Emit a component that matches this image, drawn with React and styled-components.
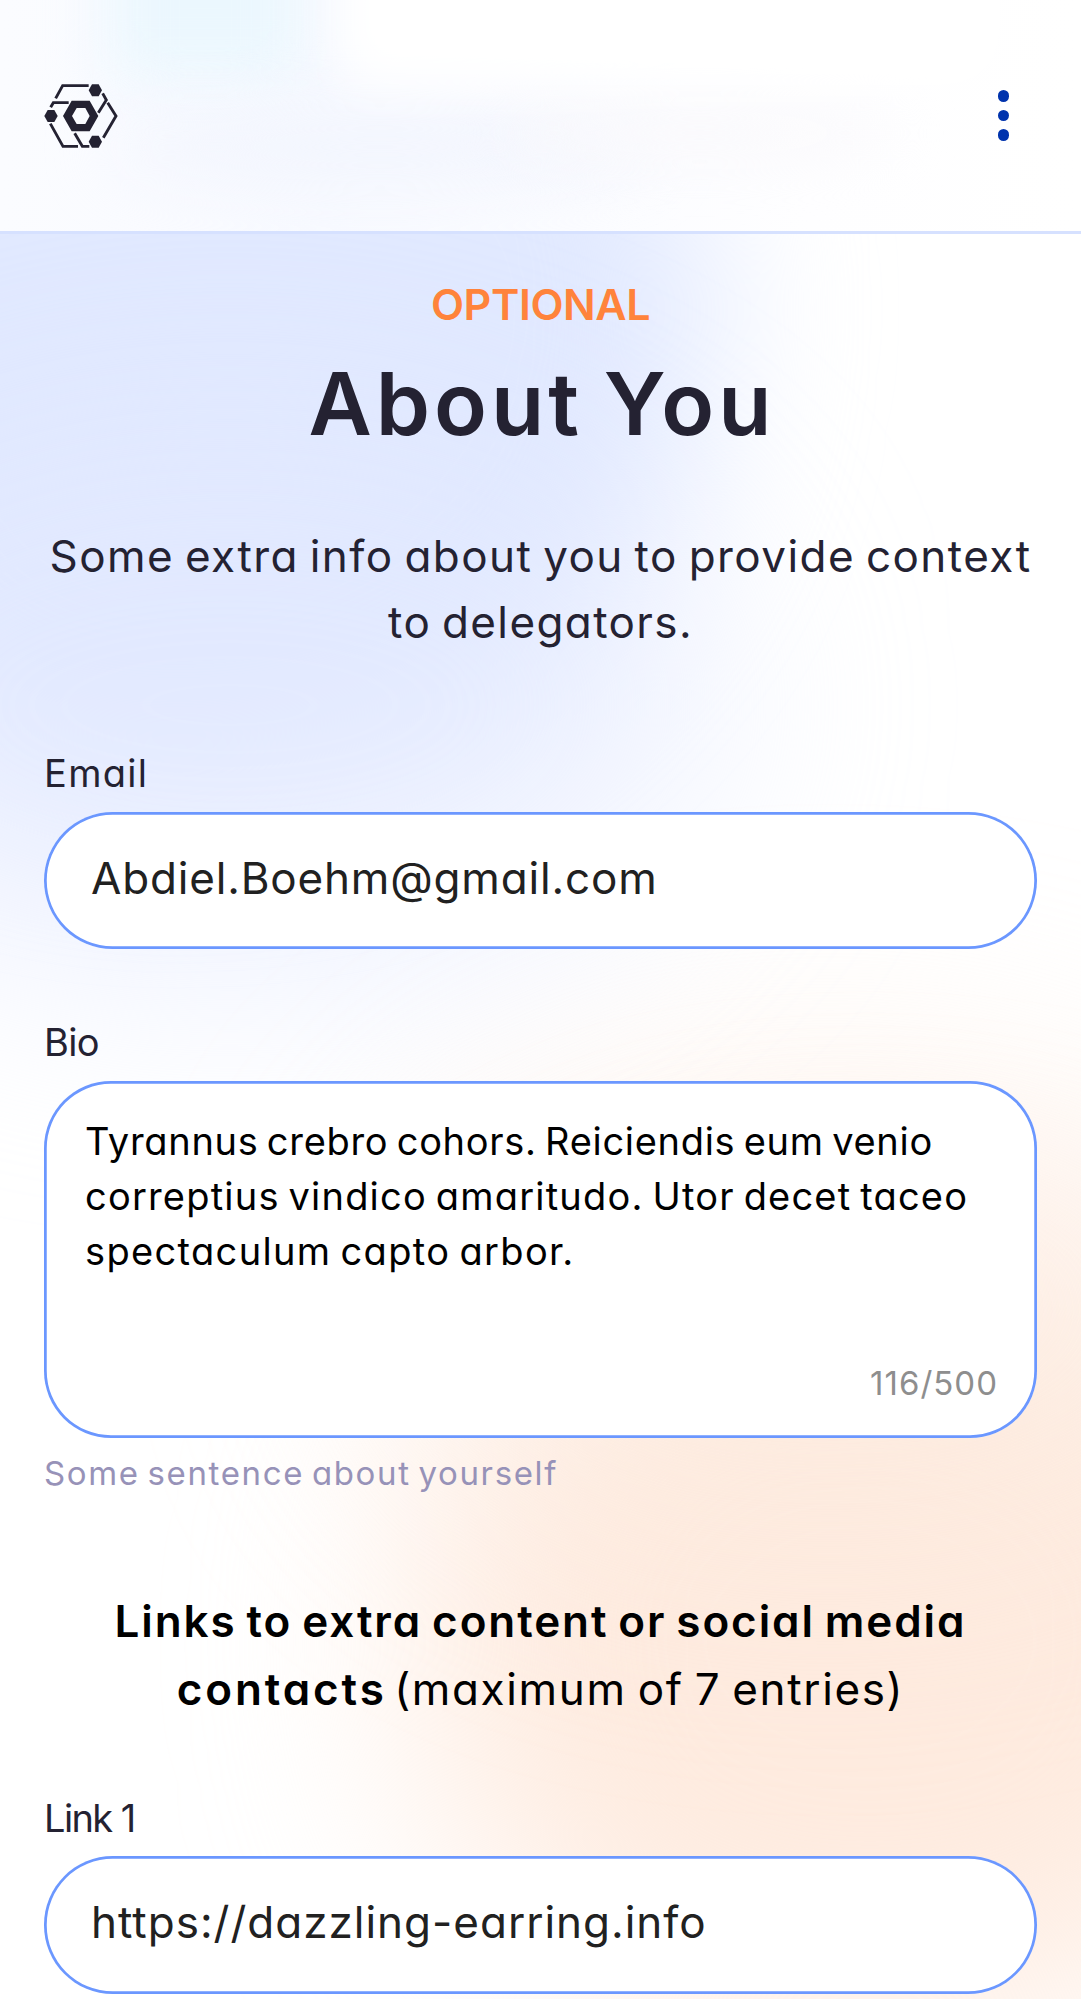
import React from 'react';
import styled, { createGlobalStyle } from 'styled-components';

const GlobalStyle = createGlobalStyle`
  *, *::before, *::after { box-sizing: border-box; }
  html, body { margin: 0; background: #fff; }
  body { font-family: Inter, "Open Sans", sans-serif; font-feature-settings: "cv11"; }
`;

const ink = '#242232';
const outline = '#6b97ff';

const Page = styled.div`
  position: relative;
  width: 1081px;
  height: 1999px;
  overflow: hidden;
  background: #fff;
  isolation: isolate;
`;

const Glow = styled.div`
  position: absolute;
  z-index: -1;
  left: ${(p) => p.$x}px;
  top: ${(p) => p.$y}px;
  width: ${(p) => p.$w}px;
  height: ${(p) => p.$h}px;
  border-radius: ${(p) => p.$r || '50%'};
  background: ${(p) => p.$color};
  filter: blur(${(p) => p.$blur}px);
`;

const Header = styled.header`
  position: relative;
  display: flex;
  align-items: center;
  justify-content: space-between;
  height: 234px;
  padding: 0 71.6px 0 44px;
  border-bottom: 3px solid #d6e1ff;
  background: linear-gradient(90deg, #fbfcff 0%, #f8faff 30%, #fefeff 75%, #fff 100%);
  overflow: hidden;
  isolation: isolate;
`;

const Logo = styled.svg`
  width: 74px;
  height: 66px;
  color: ${ink};
`;

const MenuButton = styled.button`
  display: flex;
  flex-direction: column;
  gap: 8px;
  padding: 0;
  border: 0;
  background: none;
`;

const Dot = styled.span`
  width: 11.4px;
  height: 11.4px;
  border-radius: 50%;
  background: #0033ad;
`;

const Main = styled.main`
  display: flex;
  flex-direction: column;
  padding: 36.5px 44px 0;
`;

const Overline = styled.div`
  font-size: 43px;
  font-weight: 600;
  line-height: 66px;
  letter-spacing: -0.4px;
  text-align: center;
  color: #ff833b;
`;

const Title = styled.h1`
  margin: 12.5px 0 64px;
  padding-left: 3px;
  font-size: 87px;
  font-weight: 600;
  line-height: 110px;
  letter-spacing: 4px;
  word-spacing: -5px;
  text-align: center;
  color: ${ink};
`;

const Lead = styled.p`
  margin: 0 -10px 96px;
  font-size: 44px;
  line-height: 66px;
  word-spacing: -3px;
  text-align: center;
  color: ${ink};
`;

const Line = styled.span`
  display: block;
  white-space: nowrap;
  letter-spacing: ${(p) => p.$spacing}px;
`;

const Run = styled.span`
  font-weight: ${(p) => (p.$strong ? 600 : 400)};
  letter-spacing: ${(p) => p.$spacing}px;
`;

const Field = styled.div`
  display: flex;
  flex-direction: column;
`;

const Label = styled.label`
  margin-bottom: 16.5px;
  font-size: 38px;
  line-height: 44px;
  letter-spacing: ${(p) => p.$spacing}px;
  color: ${ink};
`;

const Input = styled.input`
  display: block;
  width: 100%;
  height: 137.5px;
  padding: 0 47px 5px;
  border: 0;
  border-radius: 68.75px;
  outline: none;
  background: #fff;
  box-shadow: inset 0 0 0 2.75px ${outline};
  font: 400 44px/66px Inter, "Open Sans", sans-serif;
  font-feature-settings: "cv11";
  letter-spacing: ${(p) => p.$spacing}px;
  color: #212121;
`;

const BioBox = styled.div`
  display: flex;
  flex-direction: column;
  justify-content: space-between;
  height: 357.5px;
  padding: 33px 39px 33px 41px;
  border-radius: 67px;
  background: #fff;
  box-shadow: inset 0 0 0 2.75px ${outline};
`;

const BioText = styled.div`
  font-size: 38px;
  line-height: 55px;
  word-spacing: -3px;
  color: #000;
`;

const Counter = styled.div`
  font-size: 33px;
  line-height: 44px;
  letter-spacing: 1px;
  text-align: right;
  color: #8e8e8e;
`;

const Helper = styled.div`
  margin-top: 12.5px;
  font-size: 33px;
  line-height: 44px;
  letter-spacing: 1.63px;
  word-spacing: -3px;
  color: #9792b8;
`;

const LinksHeading = styled.p`
  margin: 92px 0 73px;
  font-size: 44px;
  line-height: 68px;
  word-spacing: -3px;
  text-align: center;
  color: #000;
`;

const Spacer = styled.div`
  height: 71px;
`;

function LogoMark() {
  return (
    <Logo viewBox="42 38 222 198" aria-label="Logo">
      <g fill="currentColor">
        <path
          fillRule="evenodd"
          d="M99 137 125 91H179L205 137 179 183H125ZM126 137 140 161H166L179 137 166 113H140Z"
        />
        <path d="M176 60 186 42H206L216 60 206 78H186Z" />
        <path d="M43 137 53 119H73L83 137 73 155H53Z" />
        <path d="M176 214 186 196H206L216 214 206 232H186Z" />
      </g>
      <g fill="none" stroke="currentColor" strokeWidth="8.6">
        <path d="M77 84 98 46H176" />
        <path d="M62 111 70 97H116" />
        <path d="M218 69 229 89 205 127" />
        <path d="M233 97 258 137 220 202" />
        <path d="M61 160 99 228H144" />
        <path d="M134 189 157 228H178" />
      </g>
    </Logo>
  );
}

export default function App() {
  return (
    <>
      <GlobalStyle />
      <Page>
        <Glow $x={-230} $y={-80} $w={940} $h={880} $color="#e1e9ff" $blur={80} $r="42% 42% 55% 40%" />
        <Glow $x={-260} $y={420} $w={980} $h={570} $color="rgba(226, 233, 255, 0.6)" $blur={110} />
        <Glow $x={420} $y={1250} $w={900} $h={780} $color="#feebdf" $blur={110} $r="46%" />
        <Glow $x={380} $y={1060} $w={900} $h={500} $color="rgba(254, 235, 223, 0.5)" $blur={115} />

        <Header>
          <Glow $x={108} $y={-110} $w={195} $h={190} $color="#ebf7fe" $blur={30} $r="20px" />
          <Glow $x={110} $y={112} $w={540} $h={70} $color="#f2f5fe" $blur={32} />
          <Glow $x={500} $y={108} $w={400} $h={50} $color="#faf9fc" $blur={28} />
          <Glow $x={340} $y={-60} $w={660} $h={145} $color="#ffffff" $blur={26} $r="30px" />
          <LogoMark />
          <MenuButton aria-label="Menu">
            <Dot />
            <Dot />
            <Dot />
          </MenuButton>
        </Header>

        <Main>
          <Overline>OPTIONAL</Overline>
          <Title>About You</Title>
          <Lead>
            <Line $spacing={1.45}>Some extra info about you to provide context</Line>
            <Line $spacing={1.4}>to delegators.</Line>
          </Lead>

          <Field>
            <Label $spacing={1.3}>Email</Label>
            <Input readOnly value="Abdiel.Boehm@gmail.com" $spacing={0.83} />
          </Field>

          <Spacer />

          <Field>
            <Label $spacing={-0.6}>Bio</Label>
            <BioBox>
              <BioText>
                <Line $spacing={0.7}>Tyrannus crebro cohors. Reiciendis eum venio</Line>
                <Line $spacing={1.2}>correptius vindico amaritudo. Utor decet taceo</Line>
                <Line $spacing={1.35}>spectaculum capto arbor.</Line>
              </BioText>
              <Counter>116/500</Counter>
            </BioBox>
            <Helper>Some sentence about yourself</Helper>
          </Field>

          <LinksHeading>
            <Line $spacing={1.9}>
              <Run $strong $spacing={1.9}>Links to extra content or social media</Run>
            </Line>
            <Line $spacing={-2}>
              <Run $strong $spacing={2.9}>contacts</Run>{' '}
              <Run $spacing={1.65}>(maximum of 7 entries)</Run>
            </Line>
          </LinksHeading>

          <Field>
            <Label $spacing={-1.6}>Link 1</Label>
            <Input readOnly value="https://dazzling-earring.info" $spacing={1} />
          </Field>
        </Main>
      </Page>
    </>
  );
}
